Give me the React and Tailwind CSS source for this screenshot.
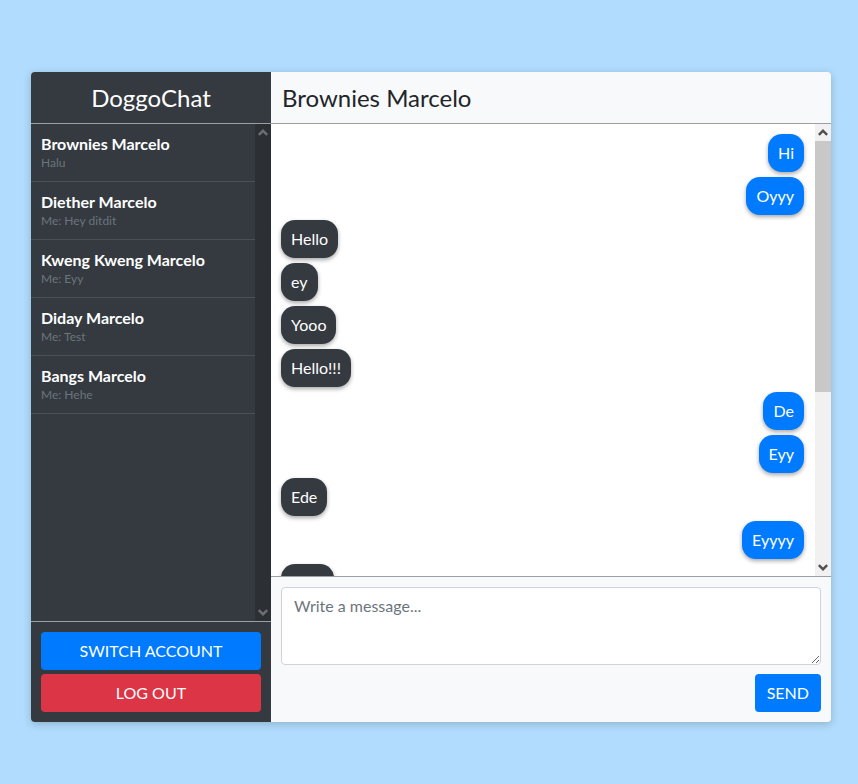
import { useState } from 'react'

const contacts = [
  { name: 'Brownies Marcelo', last: 'Halu' },
  { name: 'Diether Marcelo', last: 'Me: Hey ditdit' },
  { name: 'Kweng Kweng Marcelo', last: 'Me: Eyy' },
  { name: 'Diday Marcelo', last: 'Me: Test' },
  { name: 'Bangs Marcelo', last: 'Me: Hehe' },
]

const messages = [
  { mine: true, text: 'Hi' },
  { mine: true, text: 'Oyyy' },
  { mine: false, text: 'Hello' },
  { mine: false, text: 'ey' },
  { mine: false, text: 'Yooo' },
  { mine: false, text: 'Hello!!!' },
  { mine: true, text: 'De' },
  { mine: true, text: 'Eyy' },
  { mine: false, text: 'Ede' },
  { mine: true, text: 'Eyyyy' },
  { mine: false, text: 'Halu' },
  { mine: true, text: 'Hehe' },
  { mine: false, text: 'Yo' },
]

function Arrow({ down, color }) {
  return (
    <svg width="10" height="7" viewBox="0 0 10 7" className={down ? 'rotate-180' : ''}>
      <path d="M0 5 L5 0 L10 5 L8.3 6.7 L5 3.4 L1.7 6.7 Z" fill={color} />
    </svg>
  )
}

/* fake classic scrollbar, the headless browser draws none */
function Scrollbar({ dark, thumb }) {
  return (
    <div className={'flex w-[16px] shrink-0 flex-col ' + (dark ? 'bg-[#2c3035]' : 'bg-[#f1f1f1]')}>
      <div className="flex h-[17px] items-center justify-center">
        <Arrow color={dark ? '#6b7075' : '#505050'} />
      </div>
      <div className="flex flex-1 flex-col">
        {thumb ? <div className="h-[251px] bg-[#c8c8c8]" /> : null}
      </div>
      <div className="flex h-[17px] items-center justify-center">
        <Arrow down color={dark ? '#6b7075' : '#505050'} />
      </div>
    </div>
  )
}

function ContactItem({ name, last }) {
  return (
    <div className="border-b border-[#4b5056] px-[10px] pt-[9px] pb-[10px]">
      <div className="text-base font-bold leading-[22px] text-white">{name}</div>
      <div className="text-xs leading-4 text-[#6c757d]">{last}</div>
    </div>
  )
}

function Bubble({ mine, text }) {
  return (
    <div className={mine ? 'flex shrink-0 justify-end' : 'flex shrink-0 justify-start'}>
      <div
        className={
          'rounded-[14px] px-[10px] py-[7px] text-base leading-6 text-white shadow-[0_2px_4px_rgba(0,0,0,0.35)] ' +
          (mine ? 'bg-[#007bff]' : 'bg-[#343a40]')
        }
      >
        {text}
      </div>
    </div>
  )
}

export default function App() {
  const [draft, setDraft] = useState('')

  return (
    <div
      className="min-h-[784px] bg-[#b1dcfd] pl-[31px] pt-[72px]"
      style={{ fontFamily: 'Lato, "Open Sans", Arial, sans-serif' }}
    >
      <div className="flex h-[650px] w-[800px] overflow-hidden rounded-[4px] shadow-[0_2px_8px_rgba(0,0,0,0.2)]">
        {/* sidebar */}
        <aside className="flex w-[240px] flex-col bg-[#343a40]">
          <header className="flex h-[52px] items-center justify-center border-b border-[#9aa0a6]">
            <h1 className="text-2xl font-normal text-white">DoggoChat</h1>
          </header>
          <div className="flex min-h-0 flex-1 border-b border-[#9aa0a6]">
            <div className="flex-1 overflow-hidden">
              {contacts.map((c) => (
                <ContactItem key={c.name} {...c} />
              ))}
            </div>
            <Scrollbar dark />
          </div>
          <div className="flex flex-col gap-[4px] p-[10px]">
            <button className="h-[38px] rounded-[4px] bg-[#007bff] text-base uppercase text-white">
              Switch Account
            </button>
            <button className="h-[38px] rounded-[4px] bg-[#dc3545] text-base uppercase text-white">
              Log Out
            </button>
          </div>
        </aside>

        {/* chat */}
        <main className="flex flex-1 flex-col bg-[#f8f9fa]">
          <header className="flex h-[52px] items-center border-b border-[#9aa0a6] px-[11px]">
            <h2 className="text-2xl font-normal text-[#212529]">Brownies Marcelo</h2>
          </header>
          <div className="flex min-h-0 flex-1 border-b border-[#9aa0a6] bg-white">
            <div className="flex flex-1 flex-col gap-[5px] overflow-hidden px-[11px] pt-[10px] pl-[10px]">
              {messages.map((m, i) => (
                <Bubble key={i} {...m} />
              ))}
            </div>
            <Scrollbar thumb />
          </div>
          <div className="flex flex-col items-end gap-[9px] p-[10px]">
            <textarea
              className="h-[78px] w-full rounded-[4px] border border-[#ced4da] bg-white px-[12px] py-[6px] text-base leading-6 text-[#495057] placeholder:text-[#6c757d]"
              placeholder="Write a message..."
              value={draft}
              onChange={(e) => setDraft(e.target.value)}
            />
            <button className="h-[38px] rounded-[4px] bg-[#007bff] px-[12px] text-base uppercase text-white">
              Send
            </button>
          </div>
        </main>
      </div>
    </div>
  )
}
